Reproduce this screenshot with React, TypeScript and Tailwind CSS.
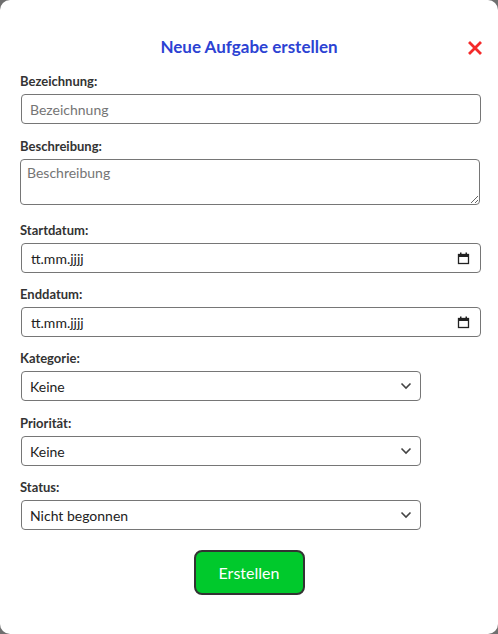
import type { ReactNode } from "react";

const font = { fontFamily: "Lato, 'Liberation Sans', sans-serif" };

function Field({ label, children, className }: { label: string; children: ReactNode; className?: string }) {
  return (
    <div className={className}>
      <label className="mb-1 block text-[13px] leading-[18px] font-bold text-[#333]">{label}</label>
      {children}
    </div>
  );
}

function CalendarIcon() {
  return (
    <svg width="13" height="13" viewBox="0 0 13 13" className="mr-[10px]">
      <rect x="1.5" y="2.5" width="10" height="9" fill="none" stroke="#222" strokeWidth="1.3" />
      <rect x="1" y="2" width="11" height="3" fill="#222" />
      <rect x="3" y="0.5" width="1.5" height="2" fill="#222" />
      <rect x="8.5" y="0.5" width="1.5" height="2" fill="#222" />
    </svg>
  );
}

function DateBox() {
  return (
    <div className="ml-px flex h-[30px] w-[460px] items-center justify-between rounded-[4px] border border-[#767676] bg-white pl-[9px] text-[14px] text-[#222]">
      <span>tt.mm.jjjj</span>
      <CalendarIcon />
    </div>
  );
}

function SelectBox({ value }: { value: string }) {
  return (
    <div className="relative ml-px w-[400px]">
      <select
        defaultValue={value}
        className="block h-[30px] w-full appearance-none rounded-[4px] border border-[#767676] bg-white pl-[8px] text-[14px] text-[#222] outline-none"
        style={font}
      >
        <option>{value}</option>
      </select>
      <svg
        width="12"
        height="8"
        viewBox="0 0 12 8"
        className="pointer-events-none absolute right-[9px] top-[11px]"
      >
        <path d="M1.5 1.5 L6 6 L10.5 1.5" fill="none" stroke="#444" strokeWidth="1.6" />
      </svg>
    </div>
  );
}

export default function App() {
  return (
    <div className="h-[634px] w-[498px] bg-[#6f6f6f]" style={font}>
      <div className="relative h-full w-full rounded-[10px] bg-white px-5 pt-[35px]">
        <button className="absolute right-[16px] top-[41px]" aria-label="Schließen">
          <svg width="14" height="14" viewBox="0 0 14 14">
            <path d="M2 2 L12 12 M12 2 L2 12" stroke="#f42a2a" strokeWidth="2.8" strokeLinecap="square" />
          </svg>
        </button>
        <h2 className="mb-[13px] text-center text-[17px] leading-[24px] font-bold text-[#2c42d3]">
          Neue Aufgabe erstellen
        </h2>

        <Field label="Bezeichnung:" className="mb-[13px]">
          <input
            placeholder="Bezeichnung"
            className="ml-px block h-[30px] w-[460px] rounded-[4px] border border-[#767676] px-[8px] text-[14px] text-[#222] outline-none placeholder:text-[#757575]"
            style={font}
          />
        </Field>

        <Field label="Beschreibung:" className="mb-[16px]">
          <textarea
            placeholder="Beschreibung"
            className="block h-[46px] w-[460px] rounded-[4px] border border-[#767676] px-[6px] py-[2px] text-[14px] text-[#222] outline-none placeholder:text-[#757575]"
            style={font}
          />
        </Field>

        <Field label="Startdatum:" className="mb-[12px]">
          <DateBox />
        </Field>

        <Field label="Enddatum:" className="mb-[12px]">
          <DateBox />
        </Field>

        <Field label="Kategorie:" className="mb-[13px]">
          <SelectBox value="Keine" />
        </Field>

        <Field label="Priorität:" className="mb-[12px]">
          <SelectBox value="Keine" />
        </Field>

        <Field label="Status:">
          <SelectBox value="Nicht begonnen" />
        </Field>

        <div className="mt-[20px] flex justify-center">
          <button className="h-[45px] w-[111px] rounded-[8px] border-2 border-[#333] bg-[#00c92c] text-[16px] text-white">
            Erstellen
          </button>
        </div>
      </div>
    </div>
  );
}
